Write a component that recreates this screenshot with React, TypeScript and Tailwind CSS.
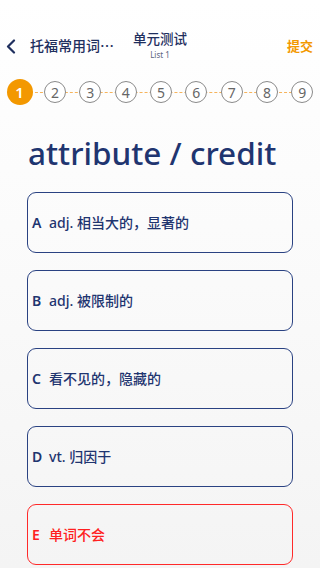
import React from "react";

const options = [
  { k: "A", t: "adj. 相当大的，显著的", red: false },
  { k: "B", t: "adj. 被限制的", red: false },
  { k: "C", t: "看不见的，隐藏的", red: false },
  { k: "D", t: "vt. 归因于", red: false },
  { k: "E", t: "单词不会", red: true },
];

export default function App() {
  const font = { fontFamily: '"Noto Sans", "Noto Sans CJK SC", sans-serif' };
  return (
    <div
      className="w-[320px] h-[568px] overflow-hidden bg-gradient-to-b from-white via-[#fafafa] to-[#f4f4f4]"
      style={font}
    >
      {/* header */}
      <div className="relative h-[32px] mt-[30px] flex items-center">
        <svg
          className="absolute left-[5px] top-[9px]"
          width="12"
          height="15"
          viewBox="0 0 12 15"
        >
          <path
            d="M9 1.5 L3 7.5 L9 13.5"
            fill="none"
            stroke="#1f2f5e"
            strokeWidth="2.2"
            strokeLinecap="round"
            strokeLinejoin="round"
          />
        </svg>
        <div className="absolute left-[30px] top-[6px] text-[14px] leading-[20px] text-[#1f2f5e] font-medium">
          托福常用词⋯
        </div>
        <div className="absolute left-0 right-0 top-[-1px] flex flex-col items-center">
          <div className="text-[13.5px] leading-[20px] text-[#1f2f5e] font-medium">
            单元测试
          </div>
          <div className="text-[8px] leading-[10px] text-[#5a6480] mt-[1px]">List 1</div>
        </div>
        <div className="absolute right-[7px] top-[6px] text-[13px] leading-[20px] text-[#f39800] font-bold">
          提交
        </div>
      </div>

      {/* steps */}
      <div className="relative mt-[17px] h-[26px] pl-[2px] grid grid-cols-9">
        <div className="absolute left-[20px] right-[18px] top-[12.5px] border-t border-dashed border-[#f6b45c]" />
        {[1, 2, 3, 4, 5, 6, 7, 8, 9].map((n) =>
          n === 1 ? (
            <div key={n} className="relative flex items-center justify-center">
              <div className="w-[26px] h-[26px] rounded-full bg-[#f39800] text-white text-[15px] font-semibold flex items-center justify-center">
                1
              </div>
            </div>
          ) : (
            <div key={n} className="relative flex items-center justify-center">
              <div className="w-[22px] h-[22px] rounded-full bg-white border border-[#8a8a8a] text-[#666] text-[14px] flex items-center justify-center">
                {n}
              </div>
            </div>
          )
        )}
      </div>

      {/* word */}
      <div className="mt-[28px] pl-[28px] text-[31.5px] leading-[40px] font-medium text-[#1f3570]">
        attribute / credit
      </div>

      {/* options */}
      <div className="mt-[19px] px-[27px] flex flex-col gap-[17px]">
        {options.map((o) => (
          <div
            key={o.k}
            className={
              o.red
                ? "h-[61px] rounded-[9px] border-[1.6px] border-[#ff2a2a] flex items-center pl-[4px] text-[#ff2020]"
                : "h-[61px] rounded-[9px] border-[1.6px] border-[#2a4282] flex items-center pl-[4px] text-[#1f3570]"
            }
          >
            <span className="text-[14px] font-semibold w-[17px]">{o.k}</span>
            <span className="text-[14px] font-medium">{o.t}</span>
          </div>
        ))}
      </div>
    </div>
  );
}
